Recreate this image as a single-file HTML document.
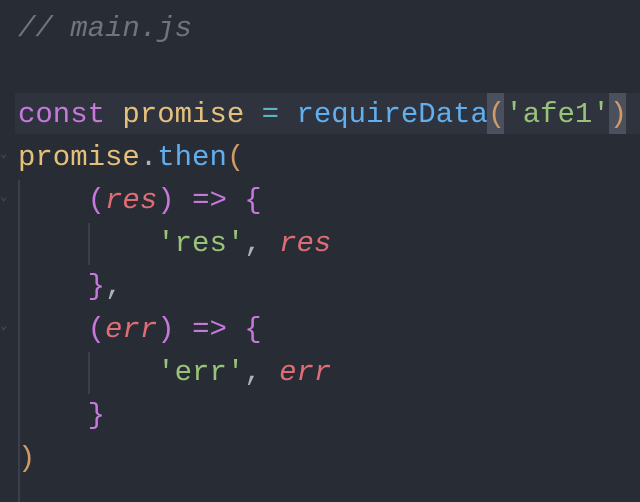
<html><head><style>
body{margin:0;width:640px;height:502px;background:#282c34;overflow:hidden;position:relative;font-family:"Liberation Mono",monospace;font-size:29px;}
.l{position:absolute;left:18px;height:43px;line-height:43px;white-space:pre;color:#abb2bf;}
.c{color:#6f7480;font-style:italic}.k{color:#c678dd}.v{color:#e5c07b}.o{color:#56b6c2}.f{color:#61afef}.s{color:#98c379}.p{color:#e06c75;font-style:italic}.b{color:#d19a66}
.hl{position:absolute;left:15px;right:0;top:93px;height:41px;background:#2e333d}
.bm{position:absolute;top:93px;height:41px;width:17px;background:#4a505c}
.g{position:absolute;width:2px;background:#3a3f4a}
.a{position:absolute;left:0;color:#4b515c;font-size:12px}
</style></head><body>
<div class="hl"></div>
<div class="bm" style="left:487px"></div>
<div class="bm" style="left:609px"></div>
<div class="g" style="left:18px;top:180px;height:322px"></div>
<div class="g" style="left:88px;top:223px;height:42px"></div>
<div class="g" style="left:88px;top:352px;height:42px"></div>
<div class="a" style="top:146px">⌄</div>
<div class="a" style="top:189px">⌄</div>
<div class="a" style="top:318px">⌄</div>
<div class="l" style="top:7px"><span class="c">// main.js</span></div>
<div class="l" style="top:93px"><span class="k">const</span> <span class="v">promise</span> <span class="o">=</span> <span class="f">requireData</span><span class="b">(</span><span class="s">'afe1'</span><span class="b">)</span></div>
<div class="l" style="top:136px"><span class="v">promise</span>.<span class="f">then</span><span class="b">(</span></div>
<div class="l" style="top:179px">    <span class="k">(</span><span class="p">res</span><span class="k">)</span> <span class="k">=&gt;</span> <span class="k">{</span></div>
<div class="l" style="top:222px">        <span class="s">'res'</span>, <span class="p">res</span></div>
<div class="l" style="top:265px">    <span class="k">}</span>,</div>
<div class="l" style="top:308px">    <span class="k">(</span><span class="p">err</span><span class="k">)</span> <span class="k">=&gt;</span> <span class="k">{</span></div>
<div class="l" style="top:351px">        <span class="s">'err'</span>, <span class="p">err</span></div>
<div class="l" style="top:394px">    <span class="k">}</span></div>
<div class="l" style="top:437px"><span class="b">)</span></div>
</body></html>
